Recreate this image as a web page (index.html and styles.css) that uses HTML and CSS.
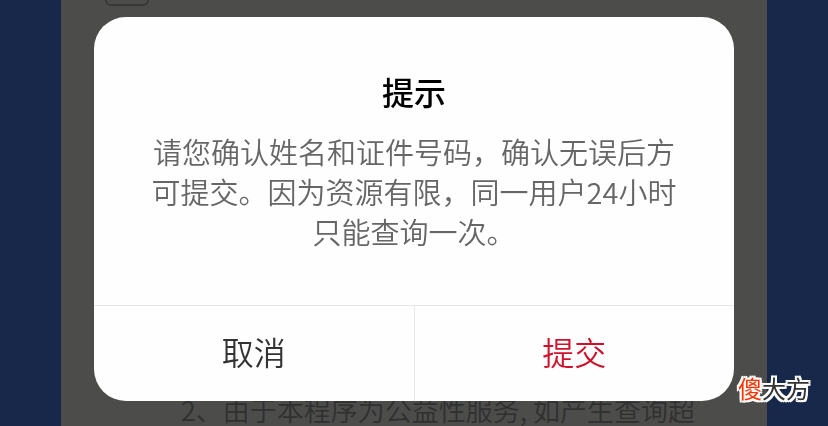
FILE: index.html
```html
<!DOCTYPE html>
<html lang="zh-CN">
<head>
    <meta charset="UTF-8">
    <meta name="viewport" content="width=device-width, initial-scale=1.0">
    <title>提示</title>
    <link rel="stylesheet" href="styles.css">
</head>
<body>
    <main class="page">
        <input type="checkbox" class="agree" aria-label="同意">
        <p class="notice">2、由于本程序为公益性服务, 如产生查询超</p>
    </main>

    <div class="overlay">
        <div class="dialog" role="dialog" aria-modal="true" aria-labelledby="dialog-title">
            <div class="dialog-body">
                <h1 class="dialog-title" id="dialog-title">提示</h1>
                <p class="dialog-text">请您确认姓名和证件号码，确认无误后方可提交。因为资源有限，同一用户24小时只能查询一次。</p>
            </div>
            <div class="dialog-actions">
                <button type="button" class="btn">取消</button>
                <button type="button" class="btn btn-submit">提交</button>
            </div>
        </div>
    </div>

    <div class="watermark"><span class="watermark-accent">傻</span>大方</div>
</body>
</html>
```

FILE: styles.css
```css
* {
    box-sizing: border-box;
}
body {
    margin: 0;
    height: 100vh;
    overflow: hidden;
    padding: 0 61px;
    background-color: #17284b;
    font-family: "Noto Sans CJK SC", sans-serif;
}
.page {
    height: 100%;
    display: flex;
    flex-direction: column;
    justify-content: space-between;
    align-items: flex-start;
    overflow: hidden;
    background-color: #4c4d4b;
}
.agree {
    appearance: none;
    width: 44px;
    height: 44px;
    margin: -38px 0 0 44px;
    border: 2px solid #373839;
    border-radius: 6px;
}
.notice {
    margin: 0 0 0 120px;
    color: #303030;
    font-size: 27px;
    font-weight: 350;
    line-height: 32px;
    white-space: nowrap;
}

/* Dialog */
.overlay {
    position: fixed;
    inset: 0;
    padding: 17px 94px 25px;
    display: flex;
}
.dialog {
    flex: 1;
    display: flex;
    flex-direction: column;
    overflow: hidden;
    border-radius: 32px;
    background-color: #fdfefd;
}
.dialog-body {
    flex: 1;
    padding: 54px 52px 0;
    text-align: center;
}
.dialog-title {
    margin: 0 0 20px;
    color: #000;
    font-size: 32px;
    font-weight: 500;
    line-height: 40px;
}
.dialog-text {
    margin: 0;
    color: #666;
    font-size: 29px;
    font-weight: 350;
    line-height: 40px;
}
.dialog-actions {
    display: flex;
    border-top: 1px solid #e6e8e7;
}
.btn {
    flex: 1;
    height: 95px;
    padding: 0 0 6px;
    border: none;
    background: none;
    color: #333;
    font-family: inherit;
    font-size: 32px;
    font-weight: 350;
    cursor: pointer;
}
.btn + .btn {
    border-left: 1px solid #e6e8e7;
}
.btn-submit {
    color: #d0102b;
}

.watermark {
    position: fixed;
    right: 18px;
    bottom: 22px;
    color: #333;
    font-size: 24px;
    line-height: 32px;
    text-shadow: 2px 0 #fff, -2px 0 #fff, 0 2px #fff, 0 -2px #fff,
        2px 2px #fff, -2px 2px #fff, 2px -2px #fff, -2px -2px #fff,
        0 0 2px #fff;
}
.watermark-accent {
    color: #ff3300;
}
```
